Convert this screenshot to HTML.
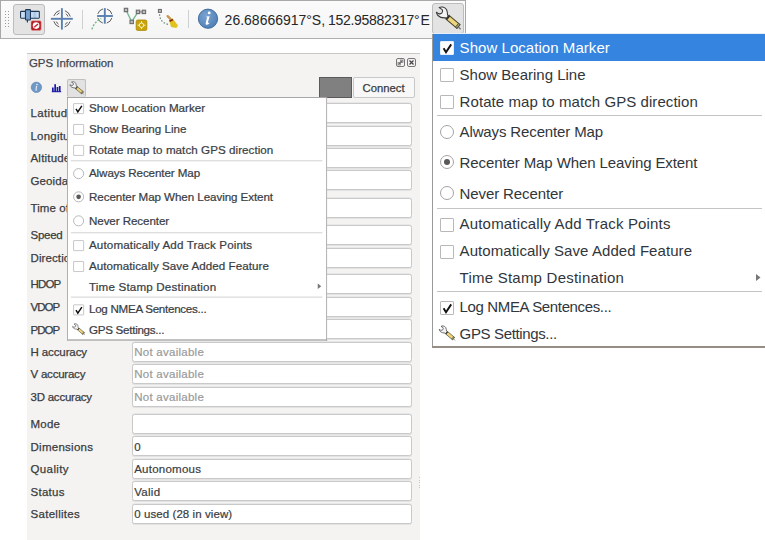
<!DOCTYPE html>
<html><head><meta charset="utf-8">
<style>
html,body{margin:0;padding:0;}
body{width:765px;height:540px;position:relative;overflow:hidden;background:#fff;font-family:"Liberation Sans", sans-serif;}
.t{position:absolute;line-height:1;white-space:nowrap;}
.lm .t{-webkit-text-stroke:0.3px #3a3e44;color:#3a3e44 !important;}
.cb{position:absolute;width:12px;height:12px;border:1px solid #b8b8b8;background:#fff;border-radius:1px;}
.ck{position:absolute;}
.rd{position:absolute;width:12px;height:12px;border:1px solid #a4a4a4;border-radius:50%;background:#fff;}
.rdot{position:absolute;width:6px;height:6px;border-radius:50%;background:#595959;}
.sep{position:absolute;left:5px;width:325px;height:1px;background:#c4c4c4;}
.fld{position:absolute;left:132px;width:278px;height:18px;border:1px solid #c9c9c9;border-radius:2.5px;background:#fff;box-shadow:0 1px 0 #e2e2e2, 0 -0.5px 0 #dedede;}
.menu{position:absolute;width:336px;height:315px;background:#fff;}
.mbl{position:absolute;left:0;top:0;width:1px;height:315px;background:#999}
.mbt{position:absolute;left:0;top:0;width:336px;height:1px;background:#8c8c8c}
.mbr{position:absolute;left:335px;top:0;width:1px;height:315px;background:#999}
.mbb{position:absolute;left:0;top:313px;width:336px;height:2px;background:#968d85}
</style></head><body>
<div style="position:absolute;left:0;top:0;width:464px;height:37px;background:linear-gradient(#fbfbfb,#f4f4f4);border:1px solid #a8a8a8;border-bottom-color:#b0b0b0"></div>
<div style="position:absolute;left:5px;top:11px;width:1px;height:1px;background:#9a9a9a"></div><div style="position:absolute;left:5px;top:14px;width:1px;height:1px;background:#9a9a9a"></div><div style="position:absolute;left:5px;top:17px;width:1px;height:1px;background:#9a9a9a"></div><div style="position:absolute;left:5px;top:20px;width:1px;height:1px;background:#9a9a9a"></div><div style="position:absolute;left:5px;top:23px;width:1px;height:1px;background:#9a9a9a"></div><div style="position:absolute;left:5px;top:26px;width:1px;height:1px;background:#9a9a9a"></div><div style="position:absolute;left:8px;top:11px;width:1px;height:1px;background:#9a9a9a"></div><div style="position:absolute;left:8px;top:14px;width:1px;height:1px;background:#9a9a9a"></div><div style="position:absolute;left:8px;top:17px;width:1px;height:1px;background:#9a9a9a"></div><div style="position:absolute;left:8px;top:20px;width:1px;height:1px;background:#9a9a9a"></div><div style="position:absolute;left:8px;top:23px;width:1px;height:1px;background:#9a9a9a"></div><div style="position:absolute;left:8px;top:26px;width:1px;height:1px;background:#9a9a9a"></div><div style="position:absolute;left:13px;top:4px;width:30px;height:29px;background:#e3e3e3;border:1px solid #bcbcbc;border-radius:3px;"></div>
<svg style="position:absolute;left:17px;top:6px" width="28" height="28" viewBox="0 0 28 28">
<defs><linearGradient id="bar" x1="0" y1="0" x2="1" y2="0"><stop offset="0" stop-color="#e3eefa"/><stop offset="0.25" stop-color="#b9d1ec"/><stop offset="0.5" stop-color="#e6f0fb"/><stop offset="0.75" stop-color="#a9c5e7"/><stop offset="1" stop-color="#e3eefa"/></linearGradient></defs>
<rect x="3.6" y="5.4" width="18.7" height="6.8" rx="0.6" fill="url(#bar)" stroke="#1f3855" stroke-width="1.1"/>
<rect x="8.5" y="3.6" width="5" height="10.4" rx="0.8" fill="#7aa2d0" stroke="#1f3855" stroke-width="1.1"/>
<line x1="10.4" y1="14" x2="10.4" y2="16.6" stroke="#1f3855" stroke-width="1.1"/>
<rect x="14" y="14.8" width="10.2" height="9.6" rx="1.4" fill="#b51d24" stroke="#f0a0a0" stroke-width="0.5"/>
<circle cx="19.1" cy="19.6" r="3.3" fill="#fff"/>
<path d="M17.2 21.3 L21 17.9" stroke="#d0202a" stroke-width="1.4"/>
</svg>
<svg style="position:absolute;left:49px;top:6px" width="26" height="26" viewBox="0 0 26 26">
<circle cx="13" cy="12.8" r="8.6" fill="none" stroke="#4a4a4a" stroke-width="0.9" stroke-dasharray="8.1 5.41" stroke-dashoffset="-2.7"/>
<circle cx="13" cy="12.8" r="6.4" fill="none" stroke="#4a4a4a" stroke-width="0.9" stroke-dasharray="3.35 6.7" stroke-dashoffset="-3.35"/>
<line x1="1.9" y1="12.8" x2="23.8" y2="12.8" stroke="#5a80b0" stroke-width="1.9"/>
<line x1="12.9" y1="2.2" x2="12.9" y2="23.6" stroke="#5a80b0" stroke-width="1.9"/>
</svg>
<div style="position:absolute;left:82px;top:10px;width:1px;height:19px;background:#d0d0d0"></div>
<svg style="position:absolute;left:88px;top:4px" width="28" height="28" viewBox="0 0 28 28">
<circle cx="16.8" cy="12" r="7.3" fill="none" stroke="#4a4a4a" stroke-width="0.9" stroke-dasharray="7.4 4.07" stroke-dashoffset="-2"/>
<line x1="9.1" y1="12" x2="24.9" y2="12" stroke="#5a80b0" stroke-width="1.9"/>
<line x1="16.8" y1="4.1" x2="16.8" y2="19.7" stroke="#5a80b0" stroke-width="1.9"/>
<path d="M3.9 25.4 Q6 18 13.2 14.5" fill="none" stroke="#72b884" stroke-width="1.4" stroke-dasharray="2 1.5"/>
</svg>
<svg style="position:absolute;left:120px;top:4px" width="30" height="30" viewBox="0 0 30 30">
<polyline points="6,6 11.7,17.9 18,7.9" fill="none" stroke="#78b891" stroke-width="1.4"/>
<line x1="18" y1="7.9" x2="23.9" y2="7.9" stroke="#777" stroke-width="1"/>
<rect x="4.3" y="4.3" width="3.4" height="3.4" fill="#bdbdbd" stroke="#6a6a6a" stroke-width="1.1"/>
<rect x="10" y="16.2" width="3.4" height="3.4" fill="#bdbdbd" stroke="#6a6a6a" stroke-width="1.1"/>
<rect x="16.3" y="6.2" width="3.4" height="3.4" fill="#bdbdbd" stroke="#6a6a6a" stroke-width="1.1"/>
<rect x="22.2" y="6.2" width="3.4" height="3.4" fill="#bdbdbd" stroke="#6a6a6a" stroke-width="1.1"/>
<rect x="16.2" y="16" width="10.6" height="10.4" rx="1.5" fill="#c9a40a" stroke="#a88600" stroke-width="0.8"/>
<circle cx="21.5" cy="21.2" r="2.2" fill="none" stroke="#fff6c0" stroke-width="1"/>
<path d="M21.5 17.2 V19 M21.5 23.4 V25.2 M17.5 21.2 H19.3 M23.7 21.2 H25.5" stroke="#fff6c0" stroke-width="0.9"/>
</svg>
<svg style="position:absolute;left:155px;top:5px" width="28" height="28" viewBox="0 0 28 28">
<rect x="3.4" y="4.4" width="3" height="3" fill="#bbb" stroke="#6a6a6a" stroke-width="1"/>
<path d="M4.6 9.2 Q4.6 17.5 14 19.6" fill="none" stroke="#6f8f78" stroke-width="1.2" stroke-dasharray="1.6 1.6"/>
<path d="M12.6 11.2 L15.6 14.2" stroke="#c79a52" stroke-width="2.4" stroke-linecap="round"/>
<path d="M14.2 15.4 L17.6 13.6 L23 20.4 L21.4 23 L16 22 Z" fill="#e2c21c"/>
<path d="M14 15.6 L17.4 13.8 L18.4 15.2 L15 17 Z" fill="#8a2a0a"/>
</svg>
<div style="position:absolute;left:188px;top:10px;width:1px;height:18px;background:#d0d0d0"></div>
<svg style="position:absolute;left:197px;top:8px" width="22" height="22" viewBox="0 0 22 22">
<defs><radialGradient id="ig" cx="40%" cy="35%" r="70%"><stop offset="0" stop-color="#7ba3d2"/><stop offset="1" stop-color="#4f7fb5"/></radialGradient></defs>
<circle cx="11" cy="10.7" r="9.6" fill="url(#ig)" stroke="#3e6b9e" stroke-width="1"/>
<circle cx="12.2" cy="4.9" r="1.4" fill="#fff"/>
<path d="M9.4 8.4 L12.6 8.2 L10.9 14.6 C10.8 15.2 11.2 15.3 12.2 14.6 L12.3 15.4 C11 16.6 9.6 16.9 8.9 16.4 C8.5 16.1 8.6 15.5 8.8 14.8 L10.1 9.3 L9.3 9.1 Z" fill="#fff"/>
</svg>
<div class="t" style="left:224.60px;top:13.35px;font-size:14px;color:#262626;">26.68666917°</div>
<div class="t" style="left:311.80px;top:13.35px;font-size:14px;color:#262626;">S,</div>
<div class="t" style="left:327.90px;top:13.35px;font-size:14px;color:#262626;letter-spacing:-0.29px">152.95882317°</div>
<div class="t" style="left:420.40px;top:13.35px;font-size:14px;color:#262626;">E</div>
<div style="position:absolute;left:432px;top:3px;width:30px;height:29px;background:#e3e3e3;border:1px solid #bcbcbc;border-radius:3px;"></div>
<svg style="position:absolute;left:433px;top:4px" width="30.00" height="28.00" viewBox="0 0 30 28">
<path d="M6.2 3.6 C8 2.6 11.5 2.4 13.5 5.5 C14.5 7.5 14.5 9.5 14.6 11 L15.8 12 L13.2 14.6 L12.5 13.8 C10.5 14 7 13.5 5 11.5 C4 10.5 3.5 9.5 3.4 8.3 L5.6 9.6 C7 10 8.5 9.6 9 8.8 C9.8 7.6 9.8 6.4 9.2 5.6 Z" fill="#f4f4f4" stroke="#3a3a3a" stroke-width="1.1" stroke-linejoin="round"/>
<path d="M16.04 11.45 L27.04 20.65 L23.96 24.35 L12.96 15.15 Z" fill="#ecd57c" stroke="#4a4530" stroke-width="1.1" stroke-linejoin="round"/>
<path d="M16.04 11.45 L17.19 12.41 L14.11 16.11 L12.96 15.15 Z" fill="#2e2e2e"/>
<path d="M25.5 19.36 L27.04 20.65 L23.96 24.35 L22.42 23.06 Z" fill="#9a9c7c" stroke="#4a4530" stroke-width="0.8"/>
<path d="M25.6 23.2 L27.6 25.2" stroke="#777" stroke-width="1.4"/>
</svg><div style="position:absolute;left:27px;top:53px;width:393px;height:487px;background:#f4f3f2;border-top:1px solid #c8c8c8;"></div>
<div style="position:absolute;left:419px;top:477px;width:1px;height:1px;background:#c4c4c4"></div><div style="position:absolute;left:419px;top:479.5px;width:1px;height:1px;background:#c4c4c4"></div><div style="position:absolute;left:419px;top:482px;width:1px;height:1px;background:#c4c4c4"></div><div style="position:absolute;left:419px;top:484.5px;width:1px;height:1px;background:#c4c4c4"></div><div style="position:absolute;left:419px;top:487px;width:1px;height:1px;background:#c4c4c4"></div><div class="t" style="left:28.90px;top:57.61px;font-size:11.45px;color:#44464a;-webkit-text-stroke:0.25px #44464a">GPS Information</div>
<svg style="position:absolute;left:395px;top:57px" width="22" height="11" viewBox="0 0 22 11">
<rect x="1.5" y="1.5" width="8" height="8" rx="1.5" fill="none" stroke="#777" stroke-width="1"/>
<path d="M3.5 7.5 L7.5 3.5" stroke="#666" stroke-width="1.2"/><rect x="5.6" y="3" width="2.4" height="2.4" fill="none" stroke="#777" stroke-width="0.7"/><rect x="3" y="5.6" width="2.4" height="2.4" fill="none" stroke="#777" stroke-width="0.7"/>
<rect x="12.5" y="1.5" width="8" height="8" rx="1.5" fill="none" stroke="#777" stroke-width="1"/>
<path d="M14.5 3.5 L18.5 7.5 M18.5 3.5 L14.5 7.5" stroke="#444" stroke-width="1.2"/>
</svg>
<svg style="position:absolute;left:30px;top:81px" width="13" height="13" viewBox="0 0 13 13">
<circle cx="6.4" cy="6.3" r="5.2" fill="#6f98c6" stroke="#5a82b0" stroke-width="0.6"/>
<path d="M5.6 5.2 L7.2 5.1 L6.5 8.8 L7.2 8.7 L7.1 9.3 C6.3 9.8 5.3 9.8 5.4 9.2 L5.9 5.7 Z" fill="#e8f0f8"/><circle cx="7" cy="3.6" r="0.8" fill="#e8f0f8"/>
</svg>
<svg style="position:absolute;left:51px;top:83px" width="12" height="10" viewBox="0 0 12 10">
<rect x="0.5" y="0.2" width="10.8" height="9.4" fill="none" stroke="#ececec" stroke-width="0.5"/>
<rect x="1" y="4.5" width="1.7" height="4.5" fill="#1a1aa6"/><rect x="3.3" y="1.2" width="1.7" height="7.8" fill="#1a1aa6"/>
<rect x="5.6" y="4" width="1.7" height="5" fill="#1a1aa6"/><rect x="7.9" y="3" width="1.7" height="6" fill="#1a1aa6"/>
<rect x="0.8" y="8.2" width="9.4" height="1" fill="#1a1aa6"/>
</svg>
<div style="position:absolute;left:67px;top:79px;width:17px;height:17px;background:#e2e2e2;border:1px solid #c0c0c0;border-radius:2px;border-bottom:none"></div>
<svg style="position:absolute;left:67.9px;top:80.3px" width="17.10" height="15.96" viewBox="0 0 30 28">
<path d="M6.2 3.6 C8 2.6 11.5 2.4 13.5 5.5 C14.5 7.5 14.5 9.5 14.6 11 L15.8 12 L13.2 14.6 L12.5 13.8 C10.5 14 7 13.5 5 11.5 C4 10.5 3.5 9.5 3.4 8.3 L5.6 9.6 C7 10 8.5 9.6 9 8.8 C9.8 7.6 9.8 6.4 9.2 5.6 Z" fill="#f4f4f4" stroke="#3a3a3a" stroke-width="1.1" stroke-linejoin="round"/>
<path d="M16.04 11.45 L27.04 20.65 L23.96 24.35 L12.96 15.15 Z" fill="#ecd57c" stroke="#4a4530" stroke-width="1.1" stroke-linejoin="round"/>
<path d="M16.04 11.45 L17.19 12.41 L14.11 16.11 L12.96 15.15 Z" fill="#2e2e2e"/>
<path d="M25.5 19.36 L27.04 20.65 L23.96 24.35 L22.42 23.06 Z" fill="#9a9c7c" stroke="#4a4530" stroke-width="0.8"/>
<path d="M25.6 23.2 L27.6 25.2" stroke="#777" stroke-width="1.4"/>
</svg><div style="position:absolute;left:319px;top:77px;width:31px;height:19px;background:#808080;border:1px solid #5a5a5a;"></div>
<div style="position:absolute;left:353px;top:77px;width:60px;height:19px;background:#f8f8f8;border:1px solid #c8c8c8;border-radius:2px;"></div>
<div class="t" style="left:362.50px;top:82.63px;font-size:11.3px;color:#3a3c40;-webkit-text-stroke:0.25px #3a3c40">Connect</div>
<div class="t" style="left:30.50px;top:107.57px;font-size:11.5px;color:#3a3c40;-webkit-text-stroke:0.25px #3a3c40;letter-spacing:0.37px">Latitude</div>
<div class="fld" style="top:103px"></div>
<div class="t" style="left:30.50px;top:130.57px;font-size:11.5px;color:#3a3c40;-webkit-text-stroke:0.25px #3a3c40;letter-spacing:0.2px">Longitude</div>
<div class="fld" style="top:125.5px"></div>
<div class="t" style="left:30.50px;top:152.57px;font-size:11.5px;color:#3a3c40;-webkit-text-stroke:0.25px #3a3c40;letter-spacing:0.2px">Altitude</div>
<div class="fld" style="top:148px"></div>
<div class="t" style="left:30.50px;top:175.57px;font-size:11.5px;color:#3a3c40;-webkit-text-stroke:0.25px #3a3c40;letter-spacing:0.1px">Geoidal Separation</div>
<div class="fld" style="top:170px"></div>
<div class="t" style="left:30.50px;top:202.57px;font-size:11.5px;color:#3a3c40;-webkit-text-stroke:0.25px #3a3c40;letter-spacing:0.1px">Time of fix</div>
<div class="fld" style="top:197.5px"></div>
<div class="t" style="left:30.50px;top:229.57px;font-size:11.5px;color:#3a3c40;-webkit-text-stroke:0.25px #3a3c40;letter-spacing:-0.27px">Speed</div>
<div class="fld" style="top:224.5px"></div>
<div class="t" style="left:30.50px;top:252.57px;font-size:11.5px;color:#3a3c40;-webkit-text-stroke:0.25px #3a3c40;letter-spacing:0.1px">Direction</div>
<div class="fld" style="top:247.5px"></div>
<div class="t" style="left:30.50px;top:278.57px;font-size:11.5px;color:#3a3c40;-webkit-text-stroke:0.25px #3a3c40;letter-spacing:-0.83px">HDOP</div>
<div class="fld" style="top:274px"></div>
<div class="t" style="left:30.50px;top:301.57px;font-size:11.5px;color:#3a3c40;-webkit-text-stroke:0.25px #3a3c40;letter-spacing:-1.0px">VDOP</div>
<div class="fld" style="top:297px"></div>
<div class="t" style="left:30.50px;top:324.57px;font-size:11.5px;color:#3a3c40;-webkit-text-stroke:0.25px #3a3c40;letter-spacing:-1.0px">PDOP</div>
<div class="fld" style="top:319px"></div>
<div class="t" style="left:30.50px;top:346.57px;font-size:11.5px;color:#3a3c40;-webkit-text-stroke:0.25px #3a3c40;letter-spacing:-0.11px">H accuracy</div>
<div class="fld" style="top:341.5px"></div>
<div class="t" style="left:134.20px;top:346.57px;font-size:11.5px;color:#9a9a9a;-webkit-text-stroke:0.2px #9a9a9a;letter-spacing:0.26px">Not available</div>
<div class="t" style="left:30.50px;top:368.57px;font-size:11.5px;color:#3a3c40;-webkit-text-stroke:0.25px #3a3c40;letter-spacing:-0.22px">V accuracy</div>
<div class="fld" style="top:364px"></div>
<div class="t" style="left:134.20px;top:368.57px;font-size:11.5px;color:#9a9a9a;-webkit-text-stroke:0.2px #9a9a9a;letter-spacing:0.26px">Not available</div>
<div class="t" style="left:30.50px;top:391.57px;font-size:11.5px;color:#3a3c40;-webkit-text-stroke:0.25px #3a3c40;letter-spacing:-0.23px">3D accuracy</div>
<div class="fld" style="top:387px"></div>
<div class="t" style="left:134.20px;top:391.57px;font-size:11.5px;color:#9a9a9a;-webkit-text-stroke:0.2px #9a9a9a;letter-spacing:0.26px">Not available</div>
<div class="t" style="left:30.50px;top:418.57px;font-size:11.5px;color:#3a3c40;-webkit-text-stroke:0.25px #3a3c40;letter-spacing:0.2px">Mode</div>
<div class="fld" style="top:414px"></div>
<div class="t" style="left:30.50px;top:441.57px;font-size:11.5px;color:#3a3c40;-webkit-text-stroke:0.25px #3a3c40;letter-spacing:0.267px">Dimensions</div>
<div class="fld" style="top:436px"></div>
<div class="t" style="left:134.20px;top:441.57px;font-size:11.5px;color:#3a3c40;-webkit-text-stroke:0.2px #3a3c40;letter-spacing:0px">0</div>
<div class="t" style="left:30.50px;top:463.57px;font-size:11.5px;color:#3a3c40;-webkit-text-stroke:0.25px #3a3c40;letter-spacing:0.38px">Quality</div>
<div class="fld" style="top:459px"></div>
<div class="t" style="left:134.20px;top:463.57px;font-size:11.5px;color:#3a3c40;-webkit-text-stroke:0.2px #3a3c40;letter-spacing:0.24px">Autonomous</div>
<div class="t" style="left:30.50px;top:486.57px;font-size:11.5px;color:#3a3c40;-webkit-text-stroke:0.25px #3a3c40;letter-spacing:0.26px">Status</div>
<div class="fld" style="top:481px"></div>
<div class="t" style="left:134.20px;top:486.57px;font-size:11.5px;color:#3a3c40;-webkit-text-stroke:0.2px #3a3c40;letter-spacing:0.3px">Valid</div>
<div class="t" style="left:30.50px;top:508.57px;font-size:11.5px;color:#3a3c40;-webkit-text-stroke:0.25px #3a3c40;letter-spacing:0.29px">Satellites</div>
<div class="fld" style="top:504px"></div>
<div class="t" style="left:134.20px;top:508.57px;font-size:11.5px;color:#3a3c40;-webkit-text-stroke:0.2px #3a3c40;letter-spacing:0.08px">0 used (28 in view)</div>
<div class="menu lm" style="left:67.2px;top:97px;transform:scale(0.774);transform-origin:0 0;"><div class="mbl"></div><div class="mbt" style="background:#8c8c8c"></div><div class="mbb" style="background:#b0b0b0"></div><div class="mbr"></div><div class="cb" style="left:8px;top:8px;"></div><svg class="ck" style="left:8px;top:8px" width="14" height="14" viewBox="0 0 14 14"><path d="M3.6 7.2 L6 11.2 L11.2 3.4" fill="none" stroke="#111" stroke-width="1.9" stroke-linecap="butt" stroke-linejoin="miter"/></svg><div class="t" style="left:28.40px;top:7.10px;font-size:15px;color:#31363b;letter-spacing:0.05px">Show Location Marker</div>
<div class="cb" style="left:8px;top:35px;"></div><div class="t" style="left:28.40px;top:34.30px;font-size:15px;color:#31363b;">Show Bearing Line</div>
<div class="cb" style="left:8px;top:62px;"></div><div class="t" style="left:28.40px;top:61.00px;font-size:15px;color:#31363b;letter-spacing:0.07px">Rotate map to match GPS direction</div>
<div class="sep" style="top:82px"></div><div class="rd" style="left:8px;top:91.5px;"></div><div class="t" style="left:28.40px;top:91.00px;font-size:15px;color:#31363b;letter-spacing:-0.13px">Always Recenter Map</div>
<div class="rd" style="left:8px;top:122px;"></div><div class="rdot" style="left:12px;top:126px;"></div><div class="t" style="left:28.40px;top:122.10px;font-size:15px;color:#31363b;letter-spacing:-0.1px">Recenter Map When Leaving Extent</div>
<div class="rd" style="left:8px;top:153px;"></div><div class="t" style="left:28.40px;top:153.30px;font-size:15px;color:#31363b;letter-spacing:-0.11px">Never Recenter</div>
<div class="sep" style="top:175px"></div><div class="cb" style="left:8px;top:185px;"></div><div class="t" style="left:28.40px;top:183.30px;font-size:15px;color:#31363b;letter-spacing:0.17px">Automatically Add Track Points</div>
<div class="cb" style="left:8px;top:211.5px;"></div><div class="t" style="left:28.40px;top:210.30px;font-size:15px;color:#31363b;letter-spacing:0.074px">Automatically Save Added Feature</div>
<div class="t" style="left:28.40px;top:237.10px;font-size:15px;color:#31363b;letter-spacing:0.23px">Time Stamp Destination</div>
<svg style="position:absolute;left:323px;top:240px" width="8" height="9" viewBox="0 0 8 9"><path d="M1 1 L5.5 4.5 L1 8 Z" fill="#777"/></svg><div class="sep" style="top:258px"></div><div class="cb" style="left:8px;top:268px;"></div><svg class="ck" style="left:8px;top:268px" width="14" height="14" viewBox="0 0 14 14"><path d="M3.6 7.2 L6 11.2 L11.2 3.4" fill="none" stroke="#111" stroke-width="1.9" stroke-linecap="butt" stroke-linejoin="miter"/></svg><div class="t" style="left:28.40px;top:266.00px;font-size:15px;color:#31363b;letter-spacing:-0.36px">Log NMEA Sentences...</div>
<svg style="position:absolute;left:4.8px;top:291.4px" width="19.50" height="18.20" viewBox="0 0 30 28">
<path d="M6.2 3.6 C8 2.6 11.5 2.4 13.5 5.5 C14.5 7.5 14.5 9.5 14.6 11 L15.8 12 L13.2 14.6 L12.5 13.8 C10.5 14 7 13.5 5 11.5 C4 10.5 3.5 9.5 3.4 8.3 L5.6 9.6 C7 10 8.5 9.6 9 8.8 C9.8 7.6 9.8 6.4 9.2 5.6 Z" fill="#f4f4f4" stroke="#3a3a3a" stroke-width="1.1" stroke-linejoin="round"/>
<path d="M16.04 11.45 L27.04 20.65 L23.96 24.35 L12.96 15.15 Z" fill="#ecd57c" stroke="#4a4530" stroke-width="1.1" stroke-linejoin="round"/>
<path d="M16.04 11.45 L17.19 12.41 L14.11 16.11 L12.96 15.15 Z" fill="#2e2e2e"/>
<path d="M25.5 19.36 L27.04 20.65 L23.96 24.35 L22.42 23.06 Z" fill="#9a9c7c" stroke="#4a4530" stroke-width="0.8"/>
<path d="M25.6 23.2 L27.6 25.2" stroke="#777" stroke-width="1.4"/>
</svg><div class="t" style="left:28.40px;top:293.20px;font-size:15px;color:#31363b;letter-spacing:-0.36px">GPS Settings...</div>
</div>
<div class="menu" style="left:432px;top:33px;"><div class="mbl"></div><div class="mbt" style="background:#e6eef8"></div><div class="mbb" style="background:#968d85"></div><div class="mbr"></div><div style="position:absolute;left:1px;top:1px;width:335px;height:27px;background:#3584e0"></div><div class="cb" style="left:8px;top:8px;border-color:#e8f0fb"></div><svg class="ck" style="left:8px;top:8px" width="14" height="14" viewBox="0 0 14 14"><path d="M3.6 7.2 L6 11.2 L11.2 3.4" fill="none" stroke="#111" stroke-width="1.9" stroke-linecap="butt" stroke-linejoin="miter"/></svg><div class="t" style="left:27.60px;top:7.10px;font-size:15px;color:#fff;letter-spacing:0.05px">Show Location Marker</div>
<div class="cb" style="left:8px;top:35px;"></div><div class="t" style="left:27.60px;top:34.30px;font-size:15px;color:#31363b;">Show Bearing Line</div>
<div class="cb" style="left:8px;top:62px;"></div><div class="t" style="left:27.60px;top:61.00px;font-size:15px;color:#31363b;letter-spacing:0.07px">Rotate map to match GPS direction</div>
<div class="sep" style="top:82px"></div><div class="rd" style="left:8px;top:91.5px;"></div><div class="t" style="left:27.60px;top:91.00px;font-size:15px;color:#31363b;letter-spacing:-0.13px">Always Recenter Map</div>
<div class="rd" style="left:8px;top:122px;"></div><div class="rdot" style="left:12px;top:126px;"></div><div class="t" style="left:27.60px;top:122.10px;font-size:15px;color:#31363b;letter-spacing:-0.1px">Recenter Map When Leaving Extent</div>
<div class="rd" style="left:8px;top:153px;"></div><div class="t" style="left:27.60px;top:153.30px;font-size:15px;color:#31363b;letter-spacing:-0.11px">Never Recenter</div>
<div class="sep" style="top:175px"></div><div class="cb" style="left:8px;top:185px;"></div><div class="t" style="left:27.60px;top:183.30px;font-size:15px;color:#31363b;letter-spacing:0.17px">Automatically Add Track Points</div>
<div class="cb" style="left:8px;top:211.5px;"></div><div class="t" style="left:27.60px;top:210.30px;font-size:15px;color:#31363b;letter-spacing:0.074px">Automatically Save Added Feature</div>
<div class="t" style="left:27.60px;top:237.10px;font-size:15px;color:#31363b;letter-spacing:0.23px">Time Stamp Destination</div>
<svg style="position:absolute;left:323px;top:240px" width="8" height="9" viewBox="0 0 8 9"><path d="M1 1 L5.5 4.5 L1 8 Z" fill="#777"/></svg><div class="sep" style="top:258px"></div><div class="cb" style="left:8px;top:268px;"></div><svg class="ck" style="left:8px;top:268px" width="14" height="14" viewBox="0 0 14 14"><path d="M3.6 7.2 L6 11.2 L11.2 3.4" fill="none" stroke="#111" stroke-width="1.9" stroke-linecap="butt" stroke-linejoin="miter"/></svg><div class="t" style="left:27.60px;top:266.00px;font-size:15px;color:#31363b;letter-spacing:-0.36px">Log NMEA Sentences...</div>
<svg style="position:absolute;left:4.8px;top:291.4px" width="19.50" height="18.20" viewBox="0 0 30 28">
<path d="M6.2 3.6 C8 2.6 11.5 2.4 13.5 5.5 C14.5 7.5 14.5 9.5 14.6 11 L15.8 12 L13.2 14.6 L12.5 13.8 C10.5 14 7 13.5 5 11.5 C4 10.5 3.5 9.5 3.4 8.3 L5.6 9.6 C7 10 8.5 9.6 9 8.8 C9.8 7.6 9.8 6.4 9.2 5.6 Z" fill="#f4f4f4" stroke="#3a3a3a" stroke-width="1.1" stroke-linejoin="round"/>
<path d="M16.04 11.45 L27.04 20.65 L23.96 24.35 L12.96 15.15 Z" fill="#ecd57c" stroke="#4a4530" stroke-width="1.1" stroke-linejoin="round"/>
<path d="M16.04 11.45 L17.19 12.41 L14.11 16.11 L12.96 15.15 Z" fill="#2e2e2e"/>
<path d="M25.5 19.36 L27.04 20.65 L23.96 24.35 L22.42 23.06 Z" fill="#9a9c7c" stroke="#4a4530" stroke-width="0.8"/>
<path d="M25.6 23.2 L27.6 25.2" stroke="#777" stroke-width="1.4"/>
</svg><div class="t" style="left:27.60px;top:293.20px;font-size:15px;color:#31363b;letter-spacing:-0.36px">GPS Settings...</div>
</div>
</body></html>
